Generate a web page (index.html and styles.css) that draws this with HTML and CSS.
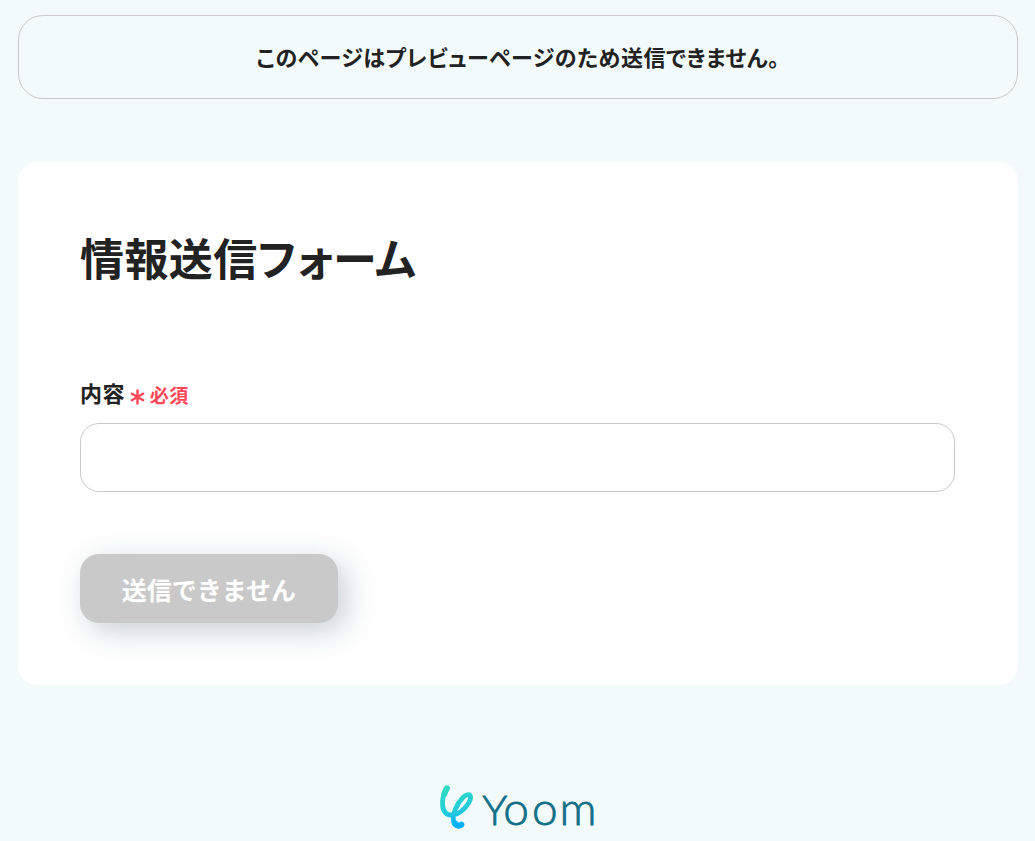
FILE: index.html
```
<!DOCTYPE html>
<html lang="ja">
<head>
  <meta charset="UTF-8" />
  <meta name="viewport" content="width=device-width, initial-scale=1.0">
  <title>情報送信フォーム</title>
  <link rel="stylesheet" href="styles.css">
</head>
<body>

  <div class="container">
    <div class="notice">このページはプレビューページのため送信できません。</div>

    <form class="card">
      <h1>情報送信フォーム</h1>

      <label class="field-label" for="content">
        <span>内容</span>
        <span class="required">
          <svg class="asterisk" viewBox="0 0 15 16">
            <path d="M7.500 .5v15M1 4.200l13 7.600M14 4.200L1 11.800" />
          </svg>
          必須
        </span>
      </label>
      <input type="text" id="content" class="field-input">

      <button type="button" class="submit-btn" disabled>送信できません</button>
    </form>
  </div>

  <footer>
    <svg class="logo" viewBox="0 0 160 61">
      <defs>
        <linearGradient id="mark" gradientUnits="userSpaceOnUse" x1="12" y1="4" x2="24" y2="48">
          <stop offset="0" stop-color="#30dcbf" />
          <stop offset="0.6" stop-color="#22cbdc" />
          <stop offset="0.85" stop-color="#08b4f4" />
          <stop offset="1" stop-color="#08a8fc" />
        </linearGradient>
      </defs>
      <g class="mark">
        <path d="M9 8.300C5.500 13 4.300 20 4.600 25C4.900 31.500 8.500 35.300 14 35C23.500 34.300 32 23 32.600 17.500C32.800 13.500 28.500 14 25 17.500C19 23.500 13.500 35 15.800 42.300C17 46.500 21.500 47 23.500 44.800" />
        <path class="thick" d="M9 8.300C7.800 10 7 11.800 6.400 13.800" />
        <path class="thick" d="M17.300 43.500C18.800 45.800 21.800 46 23.300 44.600" />
      </g>
      <text class="wordmark" y="44.500"><tspan x="44.300">Y</tspan><tspan class="small" x="65.200 94 121.500">oom</tspan></text>
    </svg>
  </footer>

</body>
</html>
```

FILE: styles.css
```
* {
  box-sizing: border-box;
}

body {
  margin: 0;
  padding: 15px 17px 0 18px;
  background: #f2fbfa;
  color: #222;
  font-family: "Noto Sans CJK JP", sans-serif;
  font-feature-settings: "palt";
}

.notice {
  height: 84px;
  border: 1px solid #c9c9c9;
  border-radius: 25px;
  text-align: center;
  font-size: 22px;
  font-weight: bold;
  letter-spacing: 0.53px;
  line-height: 80px;
}

.card {
  height: 523px;
  margin-top: 63px;
  padding: 60px 63px 62px 62px;
  background: #fff;
  border-radius: 19px;
}

h1 {
  margin: 0 0 80px;
  font-size: 44px;
  font-weight: bold;
  letter-spacing: 0.4px;
  line-height: 70px;
}

.field-label {
  display: flex;
  align-items: center;
  height: 40px;
  font-size: 22px;
  font-weight: bold;
  letter-spacing: 0.4px;
}

.required {
  display: flex;
  align-items: center;
  margin: 4px 0 0 5px;
  color: #ff4757;
  font-size: 19px;
}

.asterisk {
  width: 15px;
  height: 16px;
  margin: 6px 5px 0 0;
  fill: none;
  stroke: #ff4757;
  stroke-width: 2.4;
}

.field-input {
  display: block;
  width: 100%;
  height: 69px;
  margin-top: 11px;
  padding: 0 20px;
  border: 1px solid #c9c9c9;
  border-radius: 19px;
  background: #fff;
  font-size: 22px;
}

.submit-btn {
  display: block;
  width: 258px;
  height: 69px;
  margin-top: 62px;
  border: none;
  border-radius: 19px;
  background: #c9c9c9;
  color: #fff;
  font-family: inherit;
  font-size: 25px;
  font-weight: bold;
  box-shadow: 8px 8px 30px rgba(37, 62, 79, 0.25);
}

footer {
  display: flex;
  justify-content: center;
  margin-top: 95px;
}

.logo {
  display: block;
  width: 160px;
  height: 61px;
}

.mark {
  fill: none;
  stroke: url(#mark);
  stroke-width: 4.8;
  stroke-linecap: round;
  stroke-linejoin: round;
}

.thick {
  stroke-width: 6;
}

.wordmark {
  fill: #116f86;
  stroke: #116f86;
  stroke-width: 0.8;
  font-family: Lato, sans-serif;
  font-size: 42px;
  font-weight: 300;
}

.wordmark .small {
  font-size: 46px;
}
```
